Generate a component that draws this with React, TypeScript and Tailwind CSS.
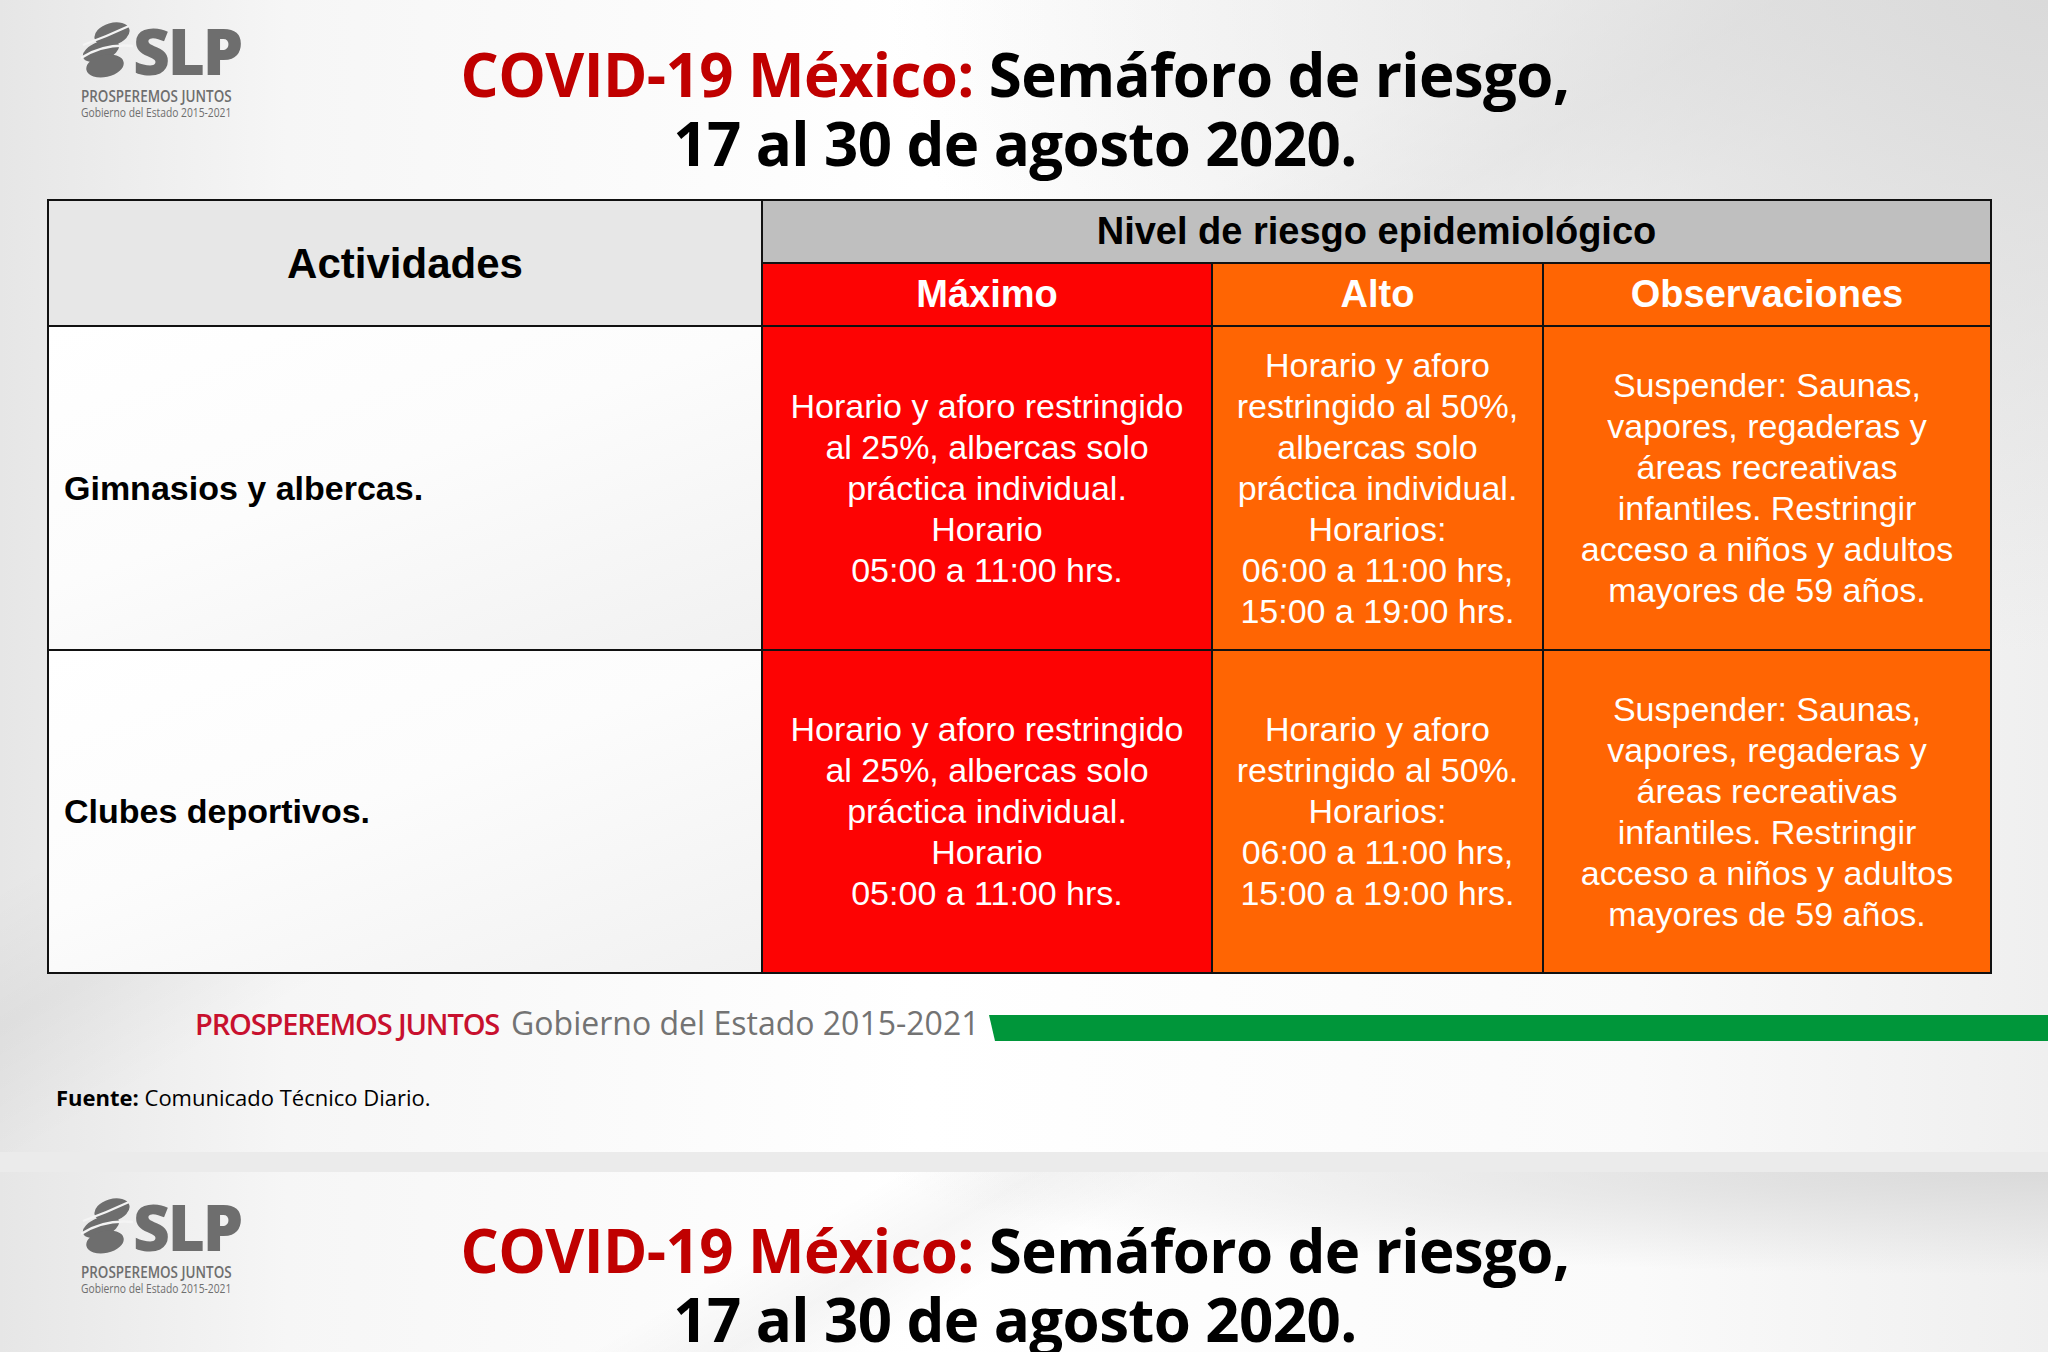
import React from "react";

const sans = "font-['Liberation_Sans',Arial,sans-serif]";
const open = "font-['Open_Sans',sans-serif]";

function Logo() {
  return (
    <div className="flex flex-col text-[#6e6e6e]">
      <div className="flex items-end h-[56px]">
        <svg width="52" height="56" viewBox="0 0 52 56" className="shrink-0">
          <ellipse cx="31" cy="12" rx="18" ry="11" transform="rotate(-16 31 12)" fill="#6e6e6e" />
          <ellipse cx="20" cy="29" rx="19" ry="9.5" transform="rotate(-20 20 29)" fill="#6e6e6e" />
          <ellipse cx="24" cy="44" rx="19" ry="11" transform="rotate(-12 24 44)" fill="#6e6e6e" />
          <path d="M0 36 C 14 27, 31 22, 52 24" stroke="#f4f4f4" strokeWidth="2.6" fill="none" />
          <path d="M2 23 C 16 18, 31 12, 48 4" stroke="#f4f4f4" strokeWidth="2.2" fill="none" />
        </svg>
        <span className={`${open} font-extrabold text-[64px] leading-[54px] tracking-[-0.035em] h-[54px]`}>
          SLP
        </span>
      </div>
      <div className={`${open} font-semibold text-[16px] leading-[17px] mt-[10px] whitespace-nowrap origin-left scale-x-[0.84]`}>
        PROSPEREMOS JUNTOS
      </div>
      <div className={`${open} text-[13px] leading-[15px] whitespace-nowrap origin-left scale-x-[0.79]`}>
        Gobierno del Estado 2015-2021
      </div>
    </div>
  );
}

function SlideHeader() {
  return (
    <div className="flex">
      <div className="w-[242px] shrink-0 pl-[81px] pt-[22px]">
        <Logo />
      </div>
      <div
        className={`${open} flex-1 mr-[260px] pt-[40px] text-center font-bold text-[60px] leading-[69px] tracking-[-0.01em] text-black whitespace-nowrap`}
      >
        <div>
          <span className="text-[#c00000]">COVID-19 México:</span> Semáforo de riesgo,
        </div>
        <div>17 al 30 de agosto 2020.</div>
      </div>
    </div>
  );
}

const slideBg =
  "bg-[radial-gradient(ellipse_at_100%_0%,#dadada_0%,rgba(255,255,255,0)_40%),linear-gradient(150deg,rgba(255,255,255,0)_38%,rgba(0,0,0,0.035)_44%,rgba(255,255,255,0)_50%),linear-gradient(90deg,#e6e6e6_0%,#f6f6f6_14%,#ffffff_45%,#fafafa_80%,#efefef_100%)]";

function Lines({ lines }: { lines: string[] }) {
  return (
    <div className="text-center">
      {lines.map((l) => (
        <div key={l} className="whitespace-nowrap">
          {l}
        </div>
      ))}
    </div>
  );
}

const maximo = [
  "Horario y aforo restringido",
  "al 25%, albercas solo",
  "práctica individual.",
  "Horario",
  "05:00 a 11:00 hrs.",
];

const alto1 = [
  "Horario y aforo",
  "restringido al 50%,",
  "albercas solo",
  "práctica individual.",
  "Horarios:",
  "06:00 a 11:00 hrs,",
  "15:00 a 19:00 hrs.",
];

const alto2 = [
  "Horario y aforo",
  "restringido al 50%.",
  "Horarios:",
  "06:00 a 11:00 hrs,",
  "15:00 a 19:00 hrs.",
];

const obs = [
  "Suspender: Saunas,",
  "vapores, regaderas y",
  "áreas recreativas",
  "infantiles. Restringir",
  "acceso a niños y adultos",
  "mayores de 59 años.",
];

const whiteCell =
  "bg-[linear-gradient(160deg,#ffffff_0%,#fcfcfc_45%,#f1f1f1_100%)] flex items-center pl-[15px]";
const redCell = "bg-[#fd0303] flex items-center justify-center text-white";
const orangeCell = "bg-[#ff6503] flex items-center justify-center text-white";

function RiskTable() {
  return (
    <div
      className={`${sans} ml-[47px] mt-[21px] w-[1945px] grid grid-cols-[712px_448px_329px_446px] grid-rows-[61px_61px_322px_321px] gap-[2px] p-[2px] bg-[#111] text-[34px] leading-[41px]`}
    >
      <div className="row-span-2 bg-[#e7e7e7] flex items-center justify-center font-bold text-[42px] text-black">
        Actividades
      </div>
      <div className="col-span-3 bg-[#bfbfbf] flex items-center justify-center font-bold text-[38px] text-black">
        Nivel de riesgo epidemiológico
      </div>
      <div className="bg-[#fd0303] flex items-center justify-center font-bold text-[38px] text-white">Máximo</div>
      <div className="bg-[#ff6503] flex items-center justify-center font-bold text-[38px] text-white">Alto</div>
      <div className="bg-[#ff6503] flex items-center justify-center font-bold text-[38px] text-white">
        Observaciones
      </div>

      <div className={`${whiteCell} font-bold text-black`}>Gimnasios y albercas.</div>
      <div className={redCell}>
        <Lines lines={maximo} />
      </div>
      <div className={orangeCell}>
        <Lines lines={alto1} />
      </div>
      <div className={orangeCell}>
        <Lines lines={obs} />
      </div>

      <div className={`${whiteCell} font-bold text-black`}>Clubes deportivos.</div>
      <div className={redCell}>
        <Lines lines={maximo} />
      </div>
      <div className={orangeCell}>
        <Lines lines={alto2} />
      </div>
      <div className={orangeCell}>
        <Lines lines={obs} />
      </div>
    </div>
  );
}

function FooterBand() {
  return (
    <div className="flex items-end mt-[37px] h-[30px]">
      <div className={`${open} pl-[195px] flex items-baseline whitespace-nowrap -mb-[6px]`}>
        <span className="font-semibold text-[29px] tracking-[-0.04em] text-[#c8102e]">PROSPEREMOS JUNTOS</span>
        <span className="ml-[12px] text-[32px] text-[#737373]">Gobierno del Estado 2015-2021</span>
      </div>
      <div className="flex-1" />
      <div className="w-[1059px] h-[26px] bg-[#00963a] [clip-path:polygon(0_0,100%_0,100%_100%,6px_100%)]" />
    </div>
  );
}

export default function App() {
  return (
    <div className="w-[2048px] h-[1352px] overflow-hidden bg-[#ebebeb] flex flex-col">
      <div className={`h-[1152px] shrink-0 ${slideBg}`}>
        <SlideHeader />
        <RiskTable />
        <FooterBand />
        <div className={`${open} pl-[56px] mt-[40px] text-[22px] text-black`}>
          <span className="font-bold">Fuente:</span> Comunicado Técnico Diario.
        </div>
      </div>
      <div className="h-[20px] shrink-0 bg-[#ebebeb]" />
      <div className={`flex-1 pt-[4px] ${slideBg} bg-[#e9e9e9]`}>
        <SlideHeader />
      </div>
    </div>
  );
}
